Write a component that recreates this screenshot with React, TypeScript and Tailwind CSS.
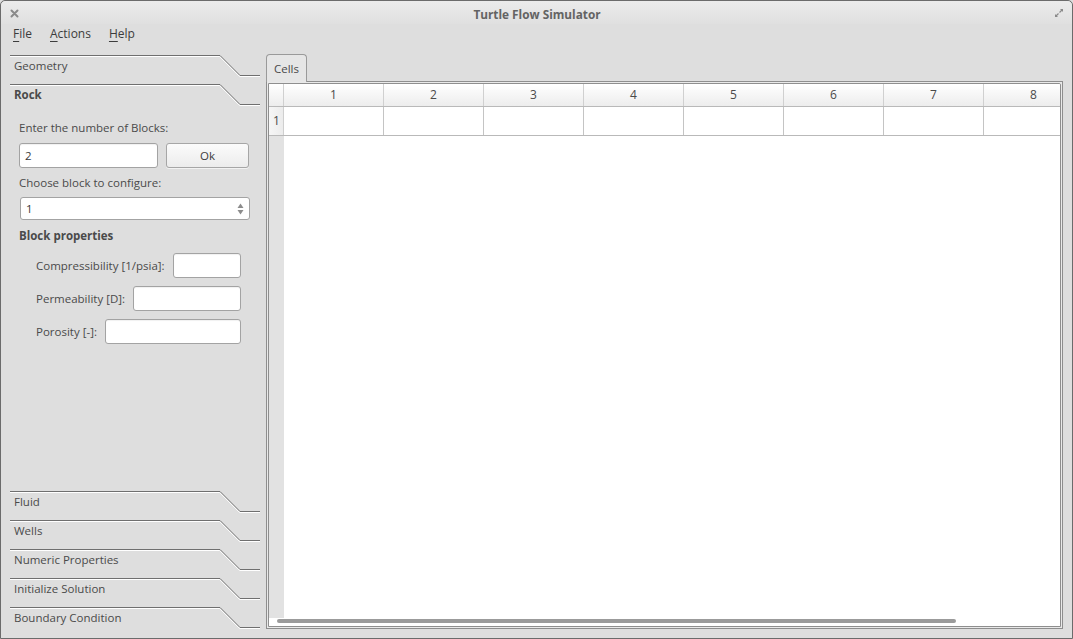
import React from "react";

const font = { fontFamily: '"Open Sans", "Noto Sans", sans-serif' };

function HeaderLine() {
  return (
    <svg className="absolute left-0 top-0" width="250" height="23" viewBox="0 0 250 23">
      <polyline points="0,0.5 210,0.5 230,20.5 250,20.5" fill="none" stroke="#6f6f6f" strokeWidth="1" />
      <polyline points="0,1.5 209.6,1.5 229.6,21.5 250,21.5" fill="none" stroke="#ffffff" strokeWidth="1" />
    </svg>
  );
}

function SectionHeader({ label, bold = false }: { label: string; bold?: boolean }) {
  return (
    <div className="relative h-[29px] shrink-0">
      <HeaderLine />
      <div className={`relative pl-[4px] leading-[22px] text-[11.5px] text-[#4a4a4a] ${bold ? "font-bold" : ""}`}>{label}</div>
    </div>
  );
}

function TextBox({ value = "", className = "" }: { value?: string; className?: string }) {
  return (
    <div
      className={`h-[25px] rounded-[3px] border border-[#a3a3a3] bg-white pl-[5px] leading-[23px] text-[11.5px] text-[#3a3a3a] shadow-[inset_0_1px_1px_rgba(0,0,0,0.06)] ${className}`}
    >
      {value}
    </div>
  );
}

function Mnemonic({ first, rest }: { first: string; rest: string }) {
  return (
    <span>
      <span className="underline underline-offset-[3px] decoration-[1px]">{first}</span>
      {rest}
    </span>
  );
}

const cols = [1, 2, 3, 4, 5, 6, 7, 8];

export default function App() {
  return (
    <div className="h-[639px] w-[1073px] overflow-hidden bg-[#dedede]" style={font}>
      <div className="flex h-[639px] w-[1073px] flex-col rounded-t-[5px] border border-[#6b6b6b] bg-[#dedede]">
        {/* title bar */}
        <div className="flex h-[23px] shrink-0 items-center rounded-t-[5px] bg-gradient-to-b from-[#ebebeb] to-[#e0e0e0] pl-[9px] pr-[8px]">
          <div className="flex w-[60px] items-center">
            <svg width="9" height="9" viewBox="0 0 9 9" className="mt-[1px]">
              <path d="M1.5 1.5 L7.5 7.5 M7.5 1.5 L1.5 7.5" stroke="#8a8a8a" strokeWidth="2" strokeLinecap="round" />
            </svg>
          </div>
          <div className="flex-1 pt-[4px] text-center text-[11.8px] font-bold text-[#636363]">Turtle Flow Simulator</div>
          <div className="flex w-[60px] justify-end">
            <svg width="10" height="10" viewBox="0 0 10 10" className="mt-[1px]">
              <path d="M6 1 H9 V4 Z" fill="#8a8a8a" />
              <path d="M4 9 H1 V6 Z" fill="#8a8a8a" />
              <path d="M8.5 1.5 L5.5 4.5 M1.5 8.5 L4.5 5.5" stroke="#8a8a8a" strokeWidth="1.2" />
            </svg>
          </div>
        </div>
        {/* menu bar */}
        <div className="flex h-[21px] shrink-0 items-center gap-[18px] pb-[2px] pl-[12px] text-[12px] text-[#3c3c3c]">
          <Mnemonic first="F" rest="ile" />
          <Mnemonic first="A" rest="ctions" />
          <Mnemonic first="H" rest="elp" />
        </div>
        {/* main */}
        <div className="flex min-h-0 flex-1 pl-[9px]">
          {/* left toolbox */}
          <div className="mt-[10px] flex w-[250px] shrink-0 flex-col">
            <SectionHeader label="Geometry" />
            <SectionHeader label="Rock" bold />
            <div className="flex h-[378px] shrink-0 flex-col pl-[9px] pr-[10px] text-[11.5px] text-[#4a4a4a]">
              <div className="mt-[7px] leading-[16px]">Enter the number of Blocks:</div>
              <div className="mt-[7px] flex gap-[8px]">
                <TextBox value="2" className="w-[139px]" />
                <div className="flex h-[25px] w-[83px] items-center justify-center rounded-[3px] border border-[#a6a6a6] bg-gradient-to-b from-[#fbfbfb] to-[#ececec] text-[11.5px] text-[#3c3c3c] shadow-[0_1px_0_rgba(255,255,255,0.6)]">
                  Ok
                </div>
              </div>
              <div className="mt-[7px] leading-[16px]">Choose block to configure:</div>
              <div className="ml-[1px] mt-[6px] flex h-[23px] items-center justify-between rounded-[3px] border border-[#a3a3a3] bg-white pl-[5px] pr-[5px] text-[11.5px] text-[#3a3a3a]">
                <span>1</span>
                <svg width="7" height="14" viewBox="0 0 7 14">
                  <path d="M3.5 1.5 L6.5 6 H0.5 Z" fill="#8c8c8c" />
                  <path d="M3.5 12.5 L6.5 8 H0.5 Z" fill="#8c8c8c" />
                </svg>
              </div>
              <div className="mt-[8px] font-bold leading-[16px]">Block properties</div>
              <div className="mt-[9px] flex flex-col gap-[8px] pl-[17px] pr-[9px]">
                <div className="flex items-center gap-[8px]">
                  <span className="whitespace-nowrap">Compressibility [1/psia]:</span>
                  <TextBox className="flex-1" />
                </div>
                <div className="flex items-center gap-[8px]">
                  <span className="whitespace-nowrap">Permeability [D]:</span>
                  <TextBox className="flex-1" />
                </div>
                <div className="flex items-center gap-[8px]">
                  <span className="whitespace-nowrap">Porosity [-]:</span>
                  <TextBox className="flex-1" />
                </div>
              </div>
            </div>
            <SectionHeader label="Fluid" />
            <SectionHeader label="Wells" />
            <SectionHeader label="Numeric Properties" />
            <SectionHeader label="Initialize Solution" />
            <SectionHeader label="Boundary Condition" />
          </div>
          {/* right tab widget */}
          <div className="ml-[6px] mt-[9px] mb-[9px] flex w-[797px] flex-col">
            <div className="flex h-[27px] shrink-0 items-end">
              <div className="relative -mb-[1px] flex h-[28px] w-[41px] items-center justify-center rounded-t-[4px] border border-b-0 border-[#9a9a9a] bg-[#e6e6e6] pt-[1px] text-[11.5px] text-[#4a4a4a]">
                Cells
              </div>
            </div>
            <div className="flex min-h-0 flex-1 flex-col border border-[#8e8e8e] bg-[#e9e9e9] p-[1px]">
              <div className="flex min-h-0 flex-1 flex-col overflow-hidden rounded-tr-[2px] border border-[#8e8e8e] bg-white">
                {/* header row */}
                <div className="flex h-[23px] shrink-0 border-b border-[#b9b9b9] bg-gradient-to-b from-[#ffffff] to-[#ededed]">
                  <div className="w-[15px] shrink-0 border-r border-[#d0d0d0]" />
                  {cols.map((c) => (
                    <div
                      key={c}
                      className="flex w-[100px] shrink-0 items-center justify-center border-r border-[#d0d0d0] text-[12px] text-[#4a4a4a]"
                    >
                      {c}
                    </div>
                  ))}
                </div>
                {/* row 1 */}
                <div className="flex h-[29px] shrink-0 border-b border-[#b9b9b9]">
                  <div className="flex w-[15px] shrink-0 items-center border-r border-[#cfcfcf] bg-gradient-to-r from-[#f6f6f6] to-[#ececec] pl-[4px] text-[12px] text-[#4a4a4a]">
                    1
                  </div>
                  {cols.map((c) => (
                    <div key={c} className="w-[100px] shrink-0 border-r border-[#c4c4c4]" />
                  ))}
                </div>
                {/* empty area */}
                <div className="flex min-h-0 flex-1">
                  <div className="w-[15px] shrink-0 bg-[#e2e2e2]" />
                  <div className="flex-1" />
                </div>
                {/* scrollbar */}
                <div className="flex h-[8px] shrink-0 items-start pl-[8px] pt-[1px]">
                  <div className="h-[4px] w-[679px] rounded-[2px] bg-[#9b9b9b]" />
                </div>
              </div>
            </div>
          </div>
        </div>
      </div>
    </div>
  );
}
